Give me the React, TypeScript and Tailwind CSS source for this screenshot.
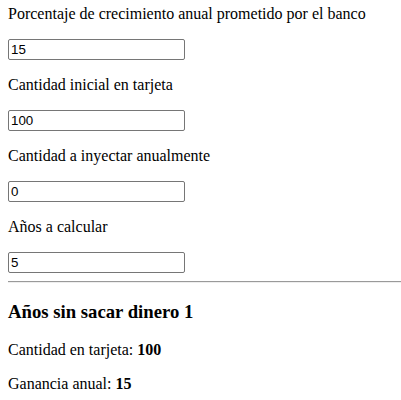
import React from "react";

const serif = { fontFamily: '"Liberation Serif", "Times New Roman", serif' };

function Field({ label, value, first }: { label: string; value: string; first?: boolean }) {
  return (
    <>
      <p className={`${first ? "mt-[5px]" : "mt-4"} mb-4 text-[16px] leading-[18px]`}>{label}</p>
      <div className="h-[21px] flex items-start">
        <input
          type="text"
          defaultValue={value}
          className="w-[177px] h-[21px] border border-[#767676] rounded-[2px] px-[2px] py-[1px] text-[13.333px] leading-[15px] text-black bg-white outline-none"
          style={{ fontFamily: '"Liberation Sans", Arial, sans-serif' }}
        />
      </div>
    </>
  );
}

export default function App() {
  return (
    <div className="bg-white text-black min-h-[400px] pl-2 pt-0 overflow-hidden" style={serif}>
      <Field first label="Porcentaje de crecimiento anual prometido por el banco" value="15" />
      <Field label="Cantidad inicial en tarjeta" value="100" />
      <Field label="Cantidad a inyectar anualmente" value="0" />
      <Field label="Años a calcular" value="5" />
      <hr className="mt-2 mb-0 border-0 border-t border-t-[#9a9a9a] border-b border-b-[#eeeeee] h-0" />
      <h3 className="mt-[18px] mb-[18.72px] text-[18.72px] leading-[21px] font-bold">Años sin sacar dinero 1</h3>
      <p className="mt-0 mb-4 text-[16px] leading-[18px]">
        Cantidad en tarjeta: <b className="font-bold">100</b>
      </p>
      <p className="mt-0 mb-4 text-[16px] leading-[18px]">
        Ganancia anual: <b className="font-bold">15</b>
      </p>
    </div>
  );
}
